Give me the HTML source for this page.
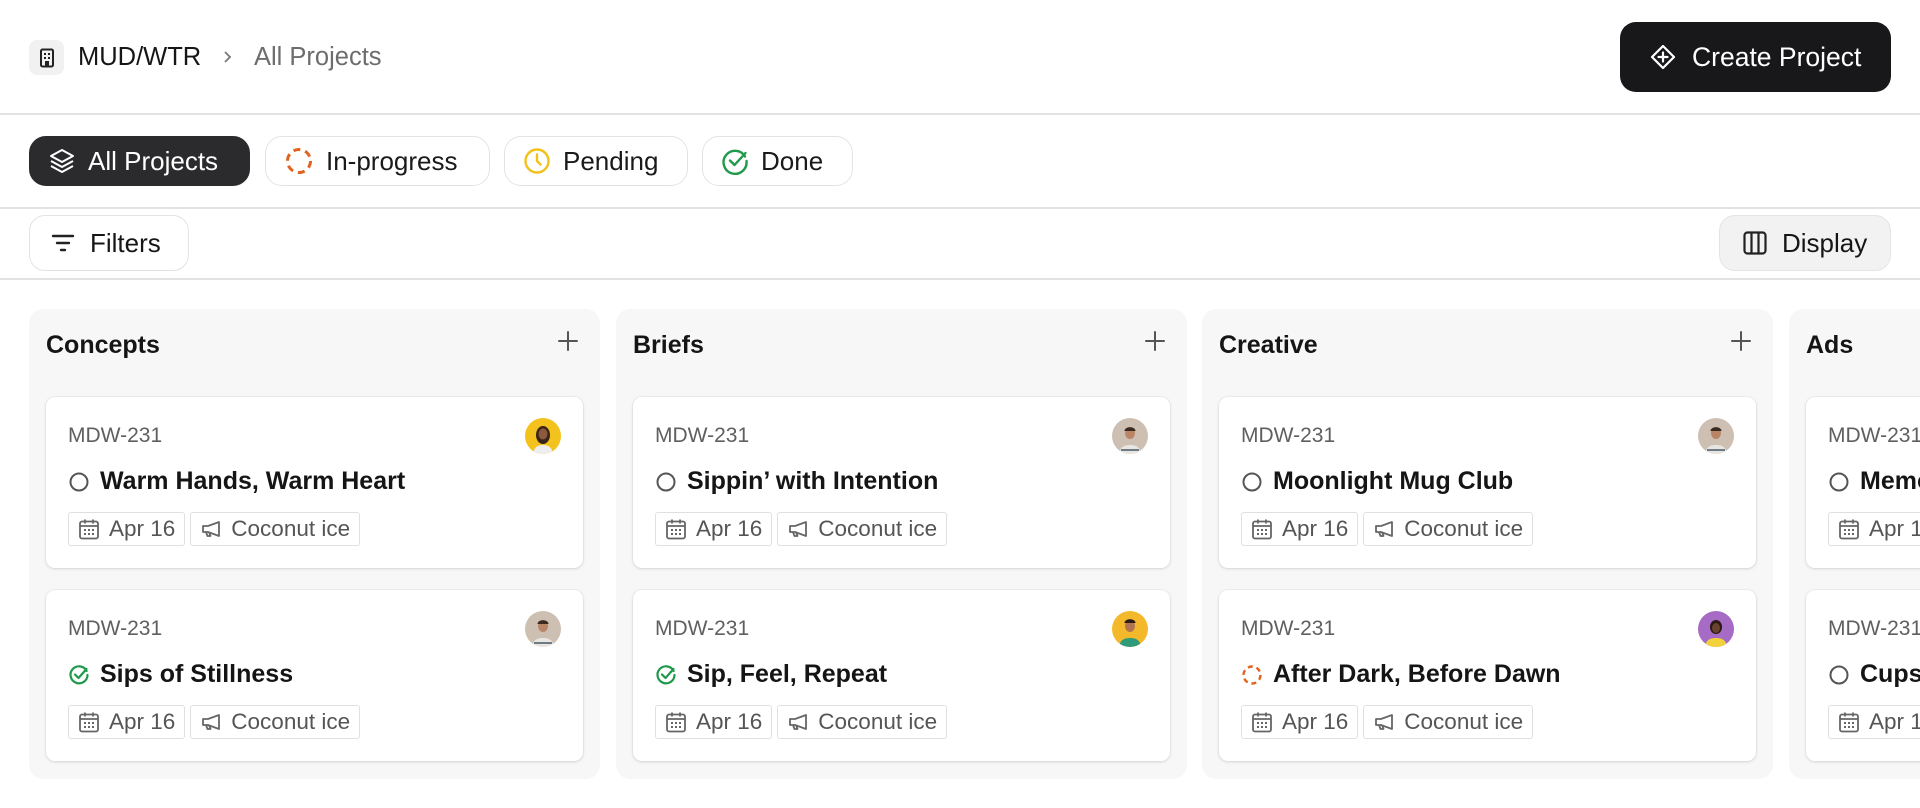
<!DOCTYPE html>
<html><head><meta charset="utf-8"><style>
*{box-sizing:border-box;margin:0;padding:0}
body{width:1920px;height:808px;overflow:hidden;background:#fff;font-family:"Liberation Sans",sans-serif;color:#161616;position:relative}
.abs{position:absolute}
.hr{position:absolute;left:0;width:1920px;height:1.5px;background:#e2e2e2}
.chip{position:absolute;top:136px;height:50px;border:1.5px solid #e3e3e3;border-radius:17px;display:flex;align-items:center;padding-left:18px;font-size:26px;color:#1a1a1a;gap:12px}
.btn{position:absolute;display:flex;align-items:center;font-size:26px;gap:14px}
.col{position:absolute;top:309px;width:571px;height:470px;background:#f7f7f7;border-radius:14px;overflow:hidden}
.col h3{position:absolute;left:17px;top:22px;font-size:25px;font-weight:bold;color:#151515}
.plus{position:absolute;right:20px;top:20px;width:24px;height:24px}
.card{position:absolute;left:17px;width:537px;height:171px;background:#fff;border-radius:9px;box-shadow:0 1px 3px rgba(0,0,0,.12),0 0 0 1px rgba(0,0,0,.03)}
.id{position:absolute;left:22px;top:27px;font-size:21px;color:#5f5f5f}
.av{position:absolute;right:22px;top:21px;width:36px;height:36px;border-radius:50%;overflow:hidden}
.title{position:absolute;left:22px;top:70px;display:flex;align-items:center;gap:10px;font-size:25px;font-weight:bold;color:#151515}
.tags{position:absolute;left:22px;top:115px;display:flex;gap:5px}
.tag{height:34px;border:1.5px solid #e0e0e0;border-radius:3px;display:flex;align-items:center;padding:0 9px 0 8px;gap:8px;font-size:22.5px;color:#555}
</style></head><body>

<!-- header -->
<div class="abs" style="left:29px;top:40px;width:35px;height:35px;background:#f1f1f1;border-radius:8px;display:flex;align-items:center;justify-content:center">
<svg width="18" height="20" viewBox="0 0 18 20"><rect x="3" y="1.5" width="12" height="17" rx="1.5" fill="none" stroke="#222" stroke-width="2"/><g fill="#222"><rect x="6" y="5" width="2" height="2"/><rect x="10" y="5" width="2" height="2"/><rect x="6" y="9" width="2" height="2"/><rect x="10" y="9" width="2" height="2"/><rect x="7" y="13" width="4" height="5"/></g></svg></div>
<div class="abs" style="left:78px;top:43px;font-size:25.5px;color:#161616">MUD/WTR</div>
<svg class="abs" style="left:221px;top:49px" width="12" height="16" viewBox="0 0 12 16"><path d="M4 3l5 5-5 5" fill="none" stroke="#777" stroke-width="1.8"/></svg>
<div class="abs" style="left:254px;top:43px;font-size:25.5px;color:#6d6d6d">All Projects</div>

<div class="btn" style="left:1620px;top:22px;width:271px;height:70px;background:#18181b;border-radius:16px;color:#fff;padding-left:29px;gap:15px">
<svg width="28" height="28" viewBox="0 0 28 28"><path d="M14 3L25 14 14 25 3 14Z" fill="none" stroke="#fff" stroke-width="2.2" stroke-linejoin="round"/><path d="M14 9.5v9M9.5 14h9" stroke="#fff" stroke-width="2.2" stroke-linecap="round"/></svg>
<span style="font-size:26.5px">Create Project</span></div>

<div class="hr" style="top:113px"></div>

<div class="chip" style="left:29px;width:221px;background:#2b2b2d;border-color:#2b2b2d;color:#fff">
<svg width="28" height="28" viewBox="0 0 28 28" fill="none" stroke="#fff" stroke-width="2" stroke-linejoin="round"><path d="M14 3L25 9 14 15 3 9Z"/><path d="M3 14l11 6 11-6"/><path d="M3 19l11 6 11-6"/></svg>All Projects</div>
<div class="chip" style="left:265px;width:225px">
<svg width="30" height="30" viewBox="0 0 30 30"><circle cx="15" cy="15" r="11.5" fill="none" stroke="#e0631f" stroke-width="3" stroke-dasharray="7 5.05" stroke-linecap="butt"/></svg>In-progress</div>
<div class="chip" style="left:504px;width:184px">
<svg width="28" height="28" viewBox="0 0 28 28"><circle cx="14" cy="14" r="11.5" fill="none" stroke="#f2c21b" stroke-width="2.4"/><path d="M14 7.5V14l3.5 3.5" fill="none" stroke="#f2c21b" stroke-width="2.4" stroke-linecap="round"/></svg>Pending</div>
<div class="chip" style="left:702px;width:151px">
<svg width="28" height="28" viewBox="0 0 28 28"><path d="M24 9.5A11.5 11.5 0 1 0 25.5 14" fill="none" stroke="#1f9a4a" stroke-width="2.4" stroke-linecap="round"/><path d="M9 13.5l4.5 4.5 11-12" fill="none" stroke="#1f9a4a" stroke-width="2.4" stroke-linecap="round" stroke-linejoin="round"/></svg>Done</div>

<div class="hr" style="top:207px"></div>

<div class="btn" style="left:29px;top:215px;width:160px;height:56px;border:1.5px solid #e3e3e3;border-radius:16px;padding-left:20px">
<svg width="26" height="22" viewBox="0 0 26 22" stroke="#222" stroke-width="2.4" stroke-linecap="round"><path d="M3 4h20M7 11h12M11 18h4"/></svg>Filters</div>
<div class="btn" style="left:1719px;top:215px;width:172px;height:56px;background:#f2f2f3;border:1.5px solid #e4e4e4;border-radius:16px;padding-left:22px">
<svg width="26" height="26" viewBox="0 0 26 26" fill="none" stroke="#222" stroke-width="2.2"><rect x="2.5" y="2.5" width="21" height="21" rx="3"/><path d="M9.5 2.5v21M16.5 2.5v21"/></svg>Display</div>

<div class="hr" style="top:278px"></div>

<svg width="0" height="0" style="position:absolute"><defs>
<symbol id="cal" viewBox="0 0 24 24"><rect x="3" y="4.5" width="18" height="17" rx="2" fill="none" stroke="#666" stroke-width="1.8"/><path d="M3 9h18M8 2.5v4M16 2.5v4" stroke="#666" stroke-width="1.8"/><g fill="#666"><rect x="7" y="12" width="2" height="2"/><rect x="11" y="12" width="2" height="2"/><rect x="15" y="12" width="2" height="2"/><rect x="7" y="16" width="2" height="2"/><rect x="11" y="16" width="2" height="2"/><rect x="15" y="16" width="2" height="2"/></g></symbol>
<symbol id="mega" viewBox="0 0 24 24"><path d="M20 5L9 9H4v6h5l11 4Z M7 15l1.5 4h3L10 15" fill="none" stroke="#666" stroke-width="1.8" stroke-linejoin="round"/></symbol>
<symbol id="todo" viewBox="0 0 22 22"><circle cx="11" cy="11" r="8.5" fill="none" stroke="#555" stroke-width="2"/></symbol>
<symbol id="done" viewBox="0 0 22 22"><path d="M18.6 7A8.5 8.5 0 1 0 19.5 11" fill="none" stroke="#1f9a4a" stroke-width="2.2" stroke-linecap="round"/><path d="M7 10.5l3.5 3.5 8-9" fill="none" stroke="#1f9a4a" stroke-width="2.2" stroke-linecap="round" stroke-linejoin="round"/></symbol>
<symbol id="prog" viewBox="0 0 22 22"><circle cx="11" cy="11" r="8.5" fill="none" stroke="#e0631f" stroke-width="2.4" stroke-dasharray="5 3.9"/></symbol>
<symbol id="plus" viewBox="0 0 24 24"><path d="M12 3v18M3 12h18" stroke="#555" stroke-width="2" stroke-linecap="round"/></symbol>
<symbol id="pY" viewBox="0 0 36 36"><rect width="36" height="36" fill="#f4c21c"/><ellipse cx="18" cy="17" rx="7" ry="9" fill="#3a2418"/><ellipse cx="18" cy="16" rx="4.5" ry="5.5" fill="#8a5a3c"/><path d="M8 36c1-7 5-9 10-9s9 2 10 9Z" fill="#eee"/></symbol>
<symbol id="pB" viewBox="0 0 36 36"><rect width="36" height="36" fill="#cdbfb1"/><ellipse cx="18" cy="15" rx="5" ry="6" fill="#b98566"/><path d="M12.5 13c0-5 11-5 11 0" fill="#3b2a20"/><path d="M7 36c1-7 5-9 11-9s10 2 11 9Z" fill="#e9e6e2"/><path d="M9 32h18" stroke="#6e7a86" stroke-width="2"/></symbol>
<symbol id="pG" viewBox="0 0 36 36"><rect width="36" height="36" fill="#f3b92a"/><ellipse cx="18" cy="15" rx="5" ry="6" fill="#b07452"/><path d="M12.5 12c0-5 11-5 11 0" fill="#2a1c14"/><path d="M7 36c1-7 5-9 11-9s10 2 11 9Z" fill="#2f9b7a"/></symbol>
<symbol id="pP" viewBox="0 0 36 36"><rect width="36" height="36" fill="#a66bc4"/><ellipse cx="18" cy="16" rx="6" ry="7" fill="#2a1a14"/><ellipse cx="18" cy="17" rx="4" ry="5" fill="#6b4230"/><path d="M7 36c1-7 5-9 11-9s10 2 11 9Z" fill="#f2d23a"/></symbol>
</defs></svg>

<!-- columns -->
<div class="col" style="left:29px">
<h3>Concepts</h3><svg class="plus"><use href="#plus"/></svg>
<div class="card" style="top:88px"><div class="id">MDW-231</div><svg class="av"><use href="#pY"/></svg>
<div class="title"><svg width="22" height="22"><use href="#todo"/></svg>Warm Hands, Warm Heart</div>
<div class="tags"><div class="tag"><svg width="24" height="24"><use href="#cal"/></svg>Apr 16</div><div class="tag"><svg width="24" height="24"><use href="#mega"/></svg>Coconut ice</div></div></div>
<div class="card" style="top:281px"><div class="id">MDW-231</div><svg class="av"><use href="#pB"/></svg>
<div class="title"><svg width="22" height="22"><use href="#done"/></svg>Sips of Stillness</div>
<div class="tags"><div class="tag"><svg width="24" height="24"><use href="#cal"/></svg>Apr 16</div><div class="tag"><svg width="24" height="24"><use href="#mega"/></svg>Coconut ice</div></div></div>
</div>

<div class="col" style="left:616px">
<h3>Briefs</h3><svg class="plus"><use href="#plus"/></svg>
<div class="card" style="top:88px"><div class="id">MDW-231</div><svg class="av"><use href="#pB"/></svg>
<div class="title"><svg width="22" height="22"><use href="#todo"/></svg>Sippin’ with Intention</div>
<div class="tags"><div class="tag"><svg width="24" height="24"><use href="#cal"/></svg>Apr 16</div><div class="tag"><svg width="24" height="24"><use href="#mega"/></svg>Coconut ice</div></div></div>
<div class="card" style="top:281px"><div class="id">MDW-231</div><svg class="av"><use href="#pG"/></svg>
<div class="title"><svg width="22" height="22"><use href="#done"/></svg>Sip, Feel, Repeat</div>
<div class="tags"><div class="tag"><svg width="24" height="24"><use href="#cal"/></svg>Apr 16</div><div class="tag"><svg width="24" height="24"><use href="#mega"/></svg>Coconut ice</div></div></div>
</div>

<div class="col" style="left:1202px">
<h3>Creative</h3><svg class="plus"><use href="#plus"/></svg>
<div class="card" style="top:88px"><div class="id">MDW-231</div><svg class="av"><use href="#pB"/></svg>
<div class="title"><svg width="22" height="22"><use href="#todo"/></svg>Moonlight Mug Club</div>
<div class="tags"><div class="tag"><svg width="24" height="24"><use href="#cal"/></svg>Apr 16</div><div class="tag"><svg width="24" height="24"><use href="#mega"/></svg>Coconut ice</div></div></div>
<div class="card" style="top:281px"><div class="id">MDW-231</div><svg class="av"><use href="#pP"/></svg>
<div class="title"><svg width="22" height="22"><use href="#prog"/></svg>After Dark, Before Dawn</div>
<div class="tags"><div class="tag"><svg width="24" height="24"><use href="#cal"/></svg>Apr 16</div><div class="tag"><svg width="24" height="24"><use href="#mega"/></svg>Coconut ice</div></div></div>
</div>

<div class="col" style="left:1789px">
<h3>Ads</h3>
<div class="card" style="top:88px"><div class="id">MDW-231</div>
<div class="title"><svg width="22" height="22"><use href="#todo"/></svg>Memories</div>
<div class="tags"><div class="tag"><svg width="24" height="24"><use href="#cal"/></svg>Apr 16</div></div></div>
<div class="card" style="top:281px"><div class="id">MDW-231</div>
<div class="title"><svg width="22" height="22"><use href="#todo"/></svg>Cups</div>
<div class="tags"><div class="tag"><svg width="24" height="24"><use href="#cal"/></svg>Apr 16</div></div></div>
</div>

</body></html>
